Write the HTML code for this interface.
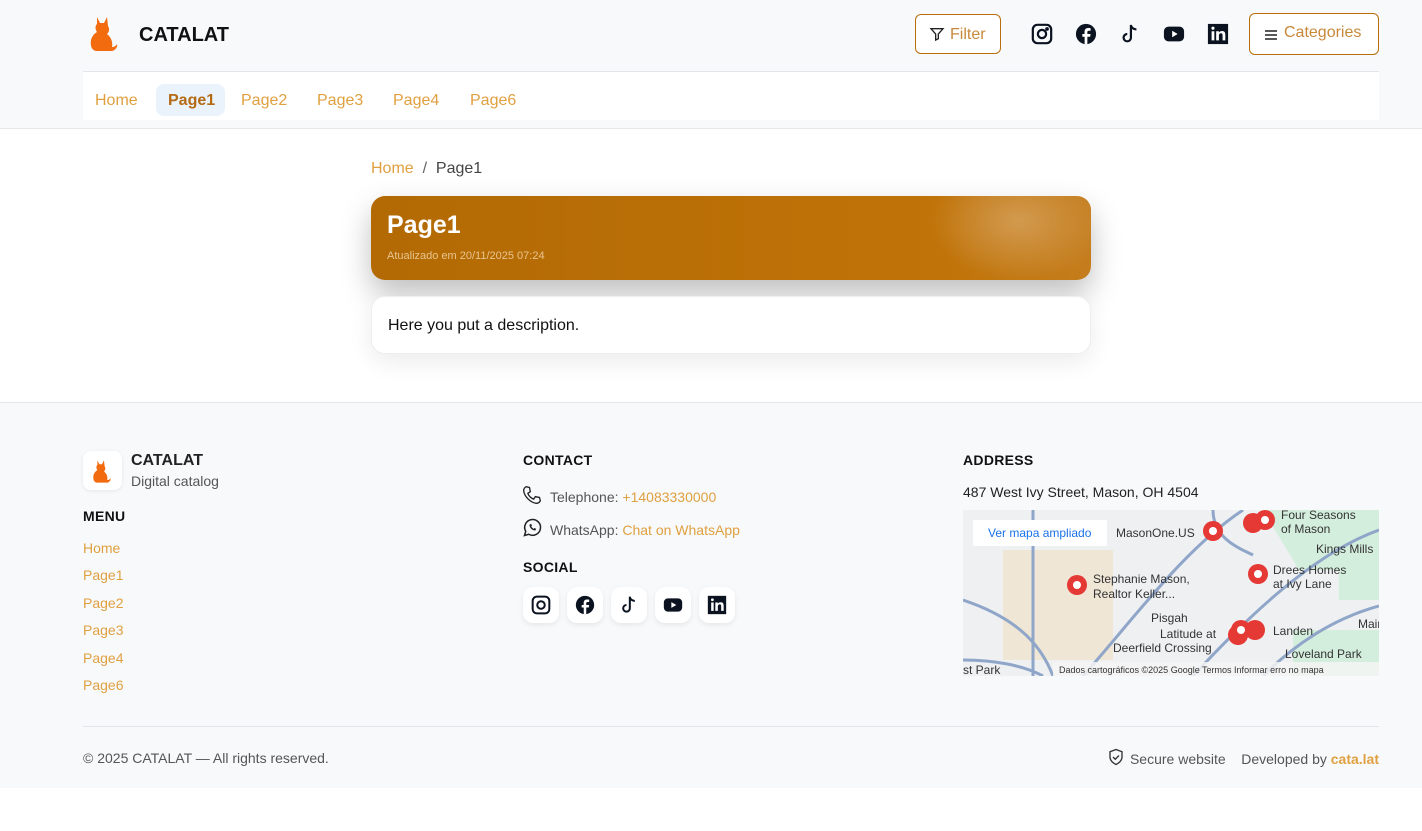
<!DOCTYPE html>
<html><head><meta charset="utf-8"><style>
*{box-sizing:border-box;margin:0;padding:0}
body{width:1422px;height:831px;background:#fff;font-family:"Liberation Sans",sans-serif;color:#111;position:relative;overflow:hidden}
.a{position:absolute}
.top{left:0;top:0;width:1422px;height:129px;background:#f7f9fb;border-bottom:1px solid #e5e7eb}
.nav{left:83px;top:71px;width:1296px;height:49px;background:#fff;border-top:1px solid #e2e5e9}
.nav span{position:absolute;top:20px;font-size:16px;color:#e0a040}
.btn{border:1px solid #b86e0c;border-radius:6px;color:#c8893a;font-size:16px;background:#fff}
.ic{width:22px;height:22px}
.foot{left:0;top:402px;width:1422px;height:386px;background:#f7f9fb;border-top:1px solid #e5e7eb}
.h{font-size:14px;font-weight:bold;color:#111;letter-spacing:.3px}
.lnk{color:#e0a040;font-size:14px}
.sb{width:36px;height:36px;background:#fff;border-radius:10px;box-shadow:0 2px 6px rgba(0,0,0,.08);display:flex;align-items:center;justify-content:center}
.gray{color:#555;font-size:14px}
</style></head><body>
<div class="a top"></div>
<svg class="a" style="left:89px;top:15px" width="30" height="38" viewBox="0 0 30 38"><path d="M8 2l3 6h4l3-6 1 9c2 3 1 6-1 8 4 3 6 8 5 13 2 0 4-1 5-3 1 3-2 7-6 7H8c-5 0-7-5-6-11 1-4 4-7 6-8-2-3-2-6 0-8z" fill="#f26b0f"/></svg>
<div class="a" style="left:139px;top:24px;font-size:20px;font-weight:bold">CATALAT</div>
<div class="a btn" style="left:915px;top:14px;width:86px;height:40px"><svg class="a" style="left:13px;top:11px" width="16" height="16" viewBox="0 0 24 24" fill="none" stroke="#222" stroke-width="2"><path d="M3 4h18l-7 8v7l-4 2v-9z"/></svg><span class="a" style="left:34px;top:11px">Filter</span></div>
<svg class="a ic" style="left:1031px;top:23px" viewBox="0 0 24 24" fill="none" stroke="#0b1220" stroke-width="2.4"><rect x="2" y="2" width="20" height="20" rx="5"/><circle cx="12" cy="12" r="4.5"/><circle cx="17.5" cy="6.5" r=".8" fill="#0b1220"/></svg>
<svg class="a ic" style="left:1075px;top:23px" viewBox="0 0 24 24"><circle cx="12" cy="12" r="11" fill="#0b1220"/><path d="M13.5 23v-8h3l.5-3h-3.5v-2c0-1 .4-1.6 1.7-1.6H17V5.6c-.5-.1-1.5-.2-2.6-.2-2.5 0-4 1.5-4 4.2V12H8v3h2.5v8z" fill="#fff"/></svg>
<svg class="a ic" style="left:1119px;top:23px" viewBox="0 0 24 24" fill="none" stroke="#0b1220" stroke-width="2.4"><path d="M13 2v14a4 4 0 1 1-4-4M13 2c0 3 3 5 6 5"/></svg>
<svg class="a ic" style="left:1163px;top:23px" viewBox="0 0 24 24"><rect x="1" y="4" width="22" height="16" rx="5" fill="#0b1220"/><path d="M10 8.5v7l6-3.5z" fill="#fff"/></svg>
<svg class="a ic" style="left:1207px;top:23px" viewBox="0 0 24 24"><rect x="1" y="1" width="22" height="22" fill="#0b1220"/><path d="M5 9h3v10H5zM6.5 4a1.7 1.7 0 1 1 0 3.4 1.7 1.7 0 0 1 0-3.4M10 9h3v1.5c.6-1 1.8-1.8 3.5-1.8 3 0 3.5 2 3.5 4.5V19h-3v-5c0-1.3 0-2.8-1.7-2.8S13 12.5 13 14v5h-3z" fill="#fff"/></svg>
<div class="a btn" style="left:1249px;top:13px;width:130px;height:42px"><svg class="a" style="left:14px;top:14px" width="14" height="14" viewBox="0 0 14 14" stroke="#222" stroke-width="1.5"><path d="M1 3h12M1 7h12M1 11h12"/></svg><span class="a" style="left:34px;top:10px">Categories</span></div>
<div class="a nav">
<span style="left:12px">Home</span>
<div class="a" style="left:73px;top:12px;width:69px;height:32px;background:#eaf2fb;border-radius:8px"></div>
<span style="left:85px;color:#b46a14;font-weight:bold">Page1</span>
<span style="left:158px">Page2</span><span style="left:234px">Page3</span><span style="left:310px">Page4</span><span style="left:387px">Page6</span>
</div>
<div class="a" style="left:371px;top:160px;font-size:16px"><span style="color:#e0a040">Home</span><span style="color:#666">&nbsp; / &nbsp;</span><span style="color:#444">Page1</span></div>
<div class="a" style="left:371px;top:196px;width:720px;height:84px;border-radius:14px;background:radial-gradient(ellipse 90px 60px at 90% 30%,#d29a4f,rgba(200,130,40,0) 100%),linear-gradient(90deg,#b36a04,#c07308 80%,#c47d1d);box-shadow:0 14px 30px rgba(0,0,0,.25)"><div class="a" style="left:16px;top:15px;color:#fff;font-size:25px;font-weight:bold">Page1</div><div class="a" style="left:16px;top:54px;color:#e8c58f;font-size:11px">Atualizado em 20/11/2025 07:24</div></div>
<div class="a" style="left:371px;top:296px;width:720px;height:58px;border-radius:14px;background:#fff;border:1px solid #eee;box-shadow:0 8px 24px rgba(0,0,0,.08)"><div class="a" style="left:16px;top:20px;font-size:16px">Here you put a description.</div></div>
<div class="a foot"></div>
<div class="a" style="left:83px;top:451px;width:39px;height:39px;background:#fff;border-radius:8px;box-shadow:0 1px 4px rgba(0,0,0,.08)"><svg class="a" style="left:9px;top:8px" width="20" height="25" viewBox="0 0 30 38"><path d="M8 2l3 6h4l3-6 1 9c2 3 1 6-1 8 4 3 6 8 5 13 2 0 4-1 5-3 1 3-2 7-6 7H8c-5 0-7-5-6-11 1-4 4-7 6-8-2-3-2-6 0-8z" fill="#f26b0f"/></svg></div>
<div class="a" style="left:131px;top:452px;font-size:16px;font-weight:bold;color:#222">CATALAT</div>
<div class="a gray" style="left:131px;top:473px">Digital catalog</div>
<div class="a h" style="left:83px;top:508px">MENU</div>
<div class="a lnk" style="left:83px;top:540px">Home</div><div class="a lnk" style="left:83px;top:567px">Page1</div><div class="a lnk" style="left:83px;top:595px">Page2</div><div class="a lnk" style="left:83px;top:622px">Page3</div><div class="a lnk" style="left:83px;top:650px">Page4</div><div class="a lnk" style="left:83px;top:677px">Page6</div>
<div class="a h" style="left:523px;top:452px">CONTACT</div>
<svg class="a" style="left:522px;top:485px" width="20" height="20" viewBox="0 0 24 24" fill="none" stroke="#222" stroke-width="1.6"><path d="M5 2l4 1 1 5-3 2c1 3 4 6 7 7l2-3 5 1 1 4c-1 2-3 3-5 3C10 21 3 14 2 7c0-2 1-4 3-5z"/></svg>
<div class="a gray" style="left:550px;top:489px">Telephone: <span style="color:#e0a040">+14083330000</span></div>
<svg class="a" style="left:522px;top:518px" width="20" height="20" viewBox="0 0 24 24" fill="none" stroke="#222" stroke-width="1.8"><path d="M3 21l1.5-5A9.5 9.5 0 1 1 8 19.5z"/><path d="M9 8c0 4 3 7 7 7l1-2-2-1-1 1c-1-.5-2.5-2-3-3l1-1-1-2z" fill="#222" stroke="none"/></svg>
<div class="a gray" style="left:550px;top:522px">WhatsApp: <span style="color:#e0a040">Chat on WhatsApp</span></div>
<div class="a h" style="left:523px;top:559px">SOCIAL</div>
<div class="a" style="left:523px;top:587px;display:flex;gap:8px">
<div class="sb"><svg width="20" height="20" viewBox="0 0 24 24" fill="none" stroke="#0b1220" stroke-width="2.4"><rect x="2" y="2" width="20" height="20" rx="5"/><circle cx="12" cy="12" r="4.5"/></svg></div>
<div class="sb"><svg width="20" height="20" viewBox="0 0 24 24"><circle cx="12" cy="12" r="11" fill="#0b1220"/><path d="M13.5 23v-8h3l.5-3h-3.5v-2c0-1 .4-1.6 1.7-1.6H17V5.6c-.5-.1-1.5-.2-2.6-.2-2.5 0-4 1.5-4 4.2V12H8v3h2.5v8z" fill="#fff"/></svg></div>
<div class="sb"><svg width="20" height="20" viewBox="0 0 24 24" fill="none" stroke="#0b1220" stroke-width="2.4"><path d="M13 2v14a4 4 0 1 1-4-4M13 2c0 3 3 5 6 5"/></svg></div>
<div class="sb"><svg width="20" height="20" viewBox="0 0 24 24"><rect x="1" y="4" width="22" height="16" rx="5" fill="#0b1220"/><path d="M10 8.5v7l6-3.5z" fill="#fff"/></svg></div>
<div class="sb"><svg width="20" height="20" viewBox="0 0 24 24"><rect x="1" y="1" width="22" height="22" fill="#0b1220"/><path d="M5 9h3v10H5zM6.5 4a1.7 1.7 0 1 1 0 3.4 1.7 1.7 0 0 1 0-3.4M10 9h3v1.5c.6-1 1.8-1.8 3.5-1.8 3 0 3.5 2 3.5 4.5V19h-3v-5c0-1.3 0-2.8-1.7-2.8S13 12.5 13 14v5h-3z" fill="#fff"/></svg></div>
</div>
<div class="a h" style="left:963px;top:452px">ADDRESS</div>
<div class="a" style="left:963px;top:484px;font-size:14px;color:#222">487 West Ivy Street, Mason, OH 4504</div>
<svg class="a" style="left:963px;top:510px" width="416" height="166" viewBox="0 0 416 166" font-family="Liberation Sans,sans-serif">
<rect width="416" height="166" fill="#eef0f2"/>
<path d="M40 40h110v110H40z" fill="#efe6d6"/>
<path d="M300 0h116v90h-40v-30h-40zM330 120h86v46h-86z" fill="#d4eedd"/>
<path d="M0 90C60 110 80 140 90 166M120 166C170 110 220 40 280 0M230 166C300 90 360 40 416 20M300 166c40-40 80-60 116-70M0 150c30 0 60 5 80 16M70 0v166M250 0c0 30 30 40 40 45" stroke="#8fa6c9" stroke-width="3" fill="none"/>
<rect x="10" y="10" width="134" height="26" fill="#fff"/>
<text x="25" y="27" font-size="12" fill="#1a73e8">Ver mapa ampliado</text>
<g font-size="12" fill="#333"><text x="153" y="27">MasonOne.US</text><text x="318" y="9">Four Seasons</text><text x="318" y="23">of Mason</text><text x="353" y="43">Kings Mills</text><text x="130" y="73">Stephanie Mason,</text><text x="130" y="88">Realtor Keller...</text><text x="310" y="64">Drees Homes</text><text x="310" y="78">at Ivy Lane</text><text x="188" y="112">Pisgah</text><text x="197" y="128">Latitude at</text><text x="150" y="142">Deerfield Crossing</text><text x="310" y="125">Landen</text><text x="322" y="148">Loveland Park</text><text x="395" y="118">Main</text><text x="0" y="164">st Park</text></g>
<g fill="#e53935"><circle cx="250" cy="21" r="10"/><circle cx="290" cy="13" r="10"/><circle cx="302" cy="10" r="10"/><circle cx="114" cy="75" r="10"/><circle cx="295" cy="64" r="10"/><circle cx="275" cy="125" r="10"/><circle cx="292" cy="120" r="10"/><circle cx="278" cy="120" r="10"/></g>
<g fill="#fff"><circle cx="250" cy="21" r="4"/><circle cx="302" cy="10" r="4"/><circle cx="114" cy="75" r="4"/><circle cx="295" cy="64" r="4"/><circle cx="278" cy="120" r="4"/></g>
<rect x="90" y="152" width="326" height="14" fill="#f5f5f5" opacity=".85"/>
<text x="96" y="163" font-size="9" fill="#333">Dados cartográficos ©2025 Google    Termos    Informar erro no mapa</text>
</svg>
<div class="a" style="left:83px;top:726px;width:1296px;height:1px;background:#e2e5e9"></div>
<div class="a gray" style="left:83px;top:750px">© 2025 CATALAT — All rights reserved.</div>
<div class="a gray" style="right:43px;top:750px;display:flex;align-items:center;white-space:nowrap"><svg width="18" height="20" viewBox="0 0 24 24" fill="none" stroke="#333" stroke-width="1.8" style="margin:-3px 5px 0 0"><path d="M12 2l8 3v7c0 5-4 8-8 10-4-2-8-5-8-10V5z"/><path d="M8 12l3 3 5-5"/></svg>Secure website &nbsp;&nbsp; Developed by&nbsp;<b style="color:#e0a040">cata.lat</b></div>
</body></html>
